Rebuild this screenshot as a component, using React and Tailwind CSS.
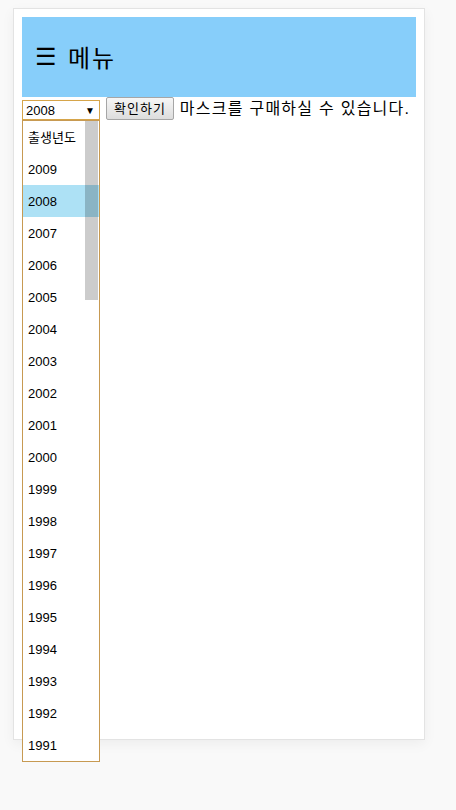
import { useState } from "react";

const years = [];
for (let y = 2009; y >= 1991; y--) years.push(String(y));

function YearDropdown() {
  const [value] = useState("2008");
  const options = ["출생년도", ...years];
  return (
    <div className="relative w-[78px]">
      <div className="flex h-[20px] items-center justify-between border border-[#d6a54a] bg-white pl-[3px] pr-[4px] pt-[2px] text-[13px] text-black">
        <span>{value}</span>
        <span className="text-[10px] leading-none">▼</span>
      </div>
      <div className="absolute left-0 top-[20px] z-10 w-[78px] border border-[#c79a52] bg-white">
        <div className="absolute right-[1px] top-0 h-[179px] w-[13px] bg-black/20" />
        {options.map((opt) => (
          <div
            key={opt}
            className={`flex h-[32px] items-center pl-[5px] pt-[2px] text-[13px] text-black ${
              opt === value ? "bg-[#ade1f5]" : ""
            }`}
          >
            {opt}
          </div>
        ))}
      </div>
    </div>
  );
}

export default function App() {
  return (
    <div
      className="min-h-screen bg-[#f9f9f9] pt-[8px] pl-[13px]"
      style={{ fontFamily: '"Liberation Sans", "Noto Sans CJK KR", sans-serif' }}
    >
      <div className="h-[732px] w-[412px] border border-[#e3e3e3] bg-white p-[8px] shadow-[0_4px_12px_rgba(0,0,0,0.05)]">
        <div className="flex h-[80px] items-center bg-[#87cefa] pl-[13px] text-[24px] text-black">
          <span className="mr-[11px]">☰</span>
          <span className="tracking-[2px]" style={{ fontFamily: '"Noto Sans CJK KR", sans-serif' }}>
            메뉴
          </span>
        </div>
        <div className="flex h-[23px] items-end">
          <YearDropdown />
          <button className="ml-[6px] h-[23px] rounded-[2px] border border-[#a6a6a6] bg-gradient-to-b from-[#f6f6f6] to-[#dddddd] px-[7px] text-[13px] tracking-[1px] text-black">
            확인하기
          </button>
          <span className="ml-[6px] self-center text-[16px] leading-[23px] tracking-[1.25px] text-black">
            마스크를 구매하실 수 있습니다.
          </span>
        </div>
      </div>
    </div>
  );
}
